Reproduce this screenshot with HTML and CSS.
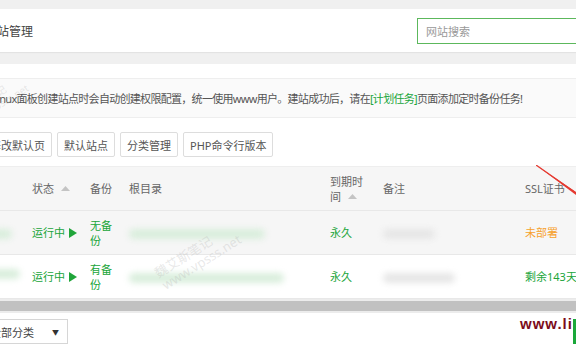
FILE: index.html
```html
<!DOCTYPE html>
<html lang="zh-CN">
<head>
<meta charset="utf-8">
<title>网站管理</title>
<link rel="stylesheet" href="styles.css">
</head>
<body>
<header class="site-head">
  <h1 class="title">网站管理</h1>
  <div class="search">网站搜索</div>
</header>
<main class="panel">
  <div class="panel-top"></div>
  <div class="notice"><span class="notice-text">Linux面板创建站点时会自动创建权限配置，统一使用www用户。建站成功后，请在<a class="link">[计划任务]</a>页面添加定时备份任务!</span></div>
  <div class="toolbar">
    <button class="btn">修改默认页</button>
    <button class="btn">默认站点</button>
    <button class="btn">分类管理</button>
    <button class="btn">PHP命令行版本</button>
  </div>
  <div class="table">
    <div class="row head">
      <div class="cell"></div>
      <div class="cell">状态 <svg class="sort" width="9" height="5" viewBox="0 0 9 5"><path d="M0 5 L4.5 0 L9 5 Z" fill="#c4c4c4"/></svg></div>
      <div class="cell">备份</div>
      <div class="cell">根目录</div>
      <div class="cell"><span class="wrap3">到期时间 <svg class="sort" width="9" height="5" viewBox="0 0 9 5"><path d="M0 5 L4.5 0 L9 5 Z" fill="#c4c4c4"/></svg></span></div>
      <div class="cell">备注</div>
      <div class="cell">SSL证书</div>
    </div>
    <div class="row hover">
      <div class="cell"><span class="blob green name1"></span></div>
      <div class="cell green-text">运行中 <svg class="play" width="8" height="10" viewBox="0 0 8 10"><path d="M0 0 L8 5 L0 10 Z" fill="#20a53a"/></svg></div>
      <div class="cell green-text"><span class="wrap2">无备份</span></div>
      <div class="cell"><span class="blob green" style="width:136px"></span></div>
      <div class="cell green-text">永久</div>
      <div class="cell"><span class="blob gray" style="width:52px"></span></div>
      <div class="cell orange-text">未部署</div>
    </div>
    <div class="row">
      <div class="cell"><span class="blob green name2"></span></div>
      <div class="cell green-text">运行中 <svg class="play" width="8" height="10" viewBox="0 0 8 10"><path d="M0 0 L8 5 L0 10 Z" fill="#20a53a"/></svg></div>
      <div class="cell green-text"><span class="wrap2">有备份</span></div>
      <div class="cell"><span class="blob green" style="width:155px"></span></div>
      <div class="cell green-text">永久</div>
      <div class="cell"><span class="blob gray" style="width:72px"></span></div>
      <div class="cell green-text">剩余143天</div>
    </div>
  </div>
  <div class="scrollbar"><div class="thumb"></div></div>
  <div class="footer">
    <div class="select"><span>全部分类</span><span class="caret">▼</span></div>
  </div>
</main>

<div class="wm wm-main"><div>魏艾斯笔记</div><div>www.vpsss.net</div></div>
<div class="wm wm-top"><div>魏艾斯笔记</div><div>www.vpsss.net</div></div>
<div class="brand">www.li</div>
<div class="brand-bar"></div>
<svg class="arrow" width="60" height="40" viewBox="0 0 60 40"><path d="M0 0 L40 27 L40 30 Z" fill="#e53a31"/><path d="M0 0 L40 28" stroke="#e53a31" stroke-width="1.3"/></svg>
</body>
</html>
```

FILE: styles.css
```css
html, body {
  margin: 0;
  padding: 0;
}
body {
  width: 576px;
  height: 356px;
  overflow: hidden;
  position: relative;
  background: #f0f0f0;
  font-family: "Noto Sans", "Noto Sans CJK SC", sans-serif;
  font-size: 11px;
  color: #555;
}
.site-head {
  margin-top: 9px;
  height: 43px;
  background: #fff;
  display: flex;
  align-items: center;
  justify-content: space-between;
  box-shadow: 0 1px 1px rgba(0, 0, 0, 0.05);
}
.title {
  margin: 0 0 0 -15px;
  font-size: 12px;
  font-weight: normal;
  color: #444;
}
.search {
  flex: none;
  width: 180px;
  height: 26px;
  box-sizing: border-box;
  margin-right: -21px;
  border: 1px solid #5cb85c;
  padding: 0 8px;
  display: flex;
  align-items: center;
  color: #999;
  font-size: 11px;
}
.panel {
  margin-top: 12px;
  background: #fff;
  height: 292px;
}
.panel-top {
  height: 14px;
}
.notice {
  height: 38px;
  border-top: 1px solid #eee;
  border-bottom: 1px solid #eee;
  background: #fafafa;
  display: flex;
  align-items: center;
  white-space: nowrap;
  color: #555;
  letter-spacing: -0.7px;
}
.notice-text {
  margin-left: -8px;
}
.link {
  color: #20a53a;
}
.toolbar {
  display: flex;
  gap: 5px;
  padding: 14px 0 9px;
  margin-left: -17px;
}
.btn {
  height: 25px;
  padding: 0 6px;
  border: 1px solid #ddd;
  border-radius: 2px;
  background: #fff;
  font: inherit;
  color: #555;
  white-space: nowrap;
}
.table {
  border-top: 1px solid #eee;
}
.row {
  display: grid;
  grid-template-columns: 32px 58px 39px 201px 53px 142px 1fr;
  height: 43px;
  align-items: center;
  border-bottom: 1px solid #e8e8e8;
  color: #666;
  white-space: nowrap;
}
.row.head {
  background: #f6f6f6;
}
.row.hover {
  background: #f6f6f6;
}
.cell {
  position: relative;
  line-height: 15px;
}
.wrap2 {
  display: inline-block;
  width: 24px;
  white-space: normal;
}
.wrap3 {
  display: inline-block;
  width: 36px;
  white-space: normal;
}
.sort {
  margin-left: 4px;
  vertical-align: 2px;
}
.play {
  margin-left: 1px;
  vertical-align: -1px;
}
.green-text {
  color: #20a53a;
}
.orange-text {
  color: #f7a12d;
}
.blob {
  display: inline-block;
  height: 10px;
  border-radius: 5px;
  vertical-align: middle;
  filter: blur(3px);
}
.blob.green {
  background: #d9eedc;
}
.blob.gray {
  background: #e6e6e6;
}
.name1 {
  width: 28px;
  margin-left: -16px;
}
.name2 {
  width: 36px;
  margin-left: -16px;
  margin-top: -8px;
}
.scrollbar {
  height: 14px;
  box-sizing: border-box;
  padding-top: 2px;
  background: #ececec;
}
.thumb {
  height: 10px;
  background: #c1c1c1;
}
.footer {
  padding-top: 6px;
}
.select {
  margin-left: -21px;
  width: 89px;
  height: 25px;
  box-sizing: border-box;
  border: 1px solid #d6d6d6;
  display: flex;
  align-items: center;
  justify-content: space-between;
  padding: 0 8px 0 10px;
  color: #444;
}
.caret {
  font-size: 7px;
  color: #333;
}
.wm {
  position: absolute;
  color: rgba(180, 180, 180, 0.3);
  font-size: 13px;
  line-height: 14px;
  transform: rotate(-32deg);
  transform-origin: left top;
  white-space: nowrap;
  pointer-events: none;
}
.wm-main {
  left: 152px;
  top: 268px;
}
.wm-top {
  left: -40px;
  top: 110px;
  font-size: 10px;
  line-height: 11px;
}
.brand {
  position: absolute;
  left: 520px;
  top: 315px;
  font-family: "Liberation Sans", sans-serif;
  font-weight: bold;
  font-size: 15px;
  letter-spacing: 1px;
  color: #7c0c1a;
}
.brand-bar {
  position: absolute;
  left: 573px;
  top: 319px;
  width: 3px;
  height: 25px;
  background: #1aa83a;
}
.arrow {
  position: absolute;
  left: 536px;
  top: 165px;
}
```
